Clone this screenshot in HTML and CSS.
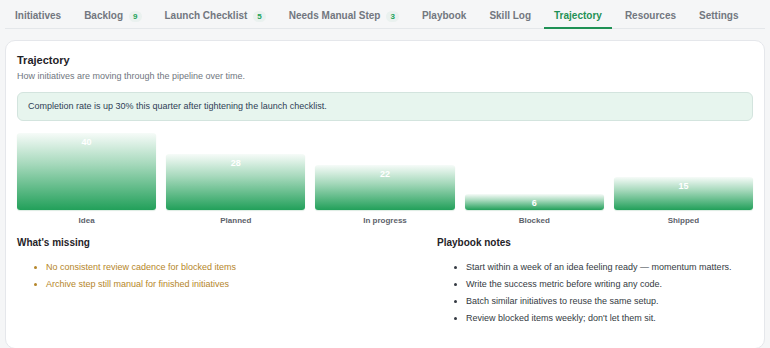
FILE: index.html
```html
<!DOCTYPE html>
<html lang="en">
<head>
<meta charset="utf-8">
<title>Trajectory</title>
<link rel="stylesheet" href="styles.css">
</head>
<body>
<div class="page">
  <nav class="tabs">
    <div class="tab">Initiatives</div>
    <div class="tab">Backlog <span class="badge">9</span></div>
    <div class="tab">Launch Checklist <span class="badge">5</span></div>
    <div class="tab">Needs Manual Step <span class="badge">3</span></div>
    <div class="tab">Playbook</div>
    <div class="tab">Skill Log</div>
    <div class="tab active">Trajectory</div>
    <div class="tab">Resources</div>
    <div class="tab">Settings</div>
  </nav>
  <section class="card">
    <h1 class="title">Trajectory</h1>
    <p class="subtitle">How initiatives are moving through the pipeline over time.</p>
    <div class="alert">Completion rate is up 30% this quarter after tightening the launch checklist.</div>
    <div class="chart">
      <div class="col">
        <div class="bar-area"><div class="bar" style="height:77px"><span class="val">40</span></div></div>
        <div class="label">Idea</div>
      </div>
      <div class="col">
        <div class="bar-area"><div class="bar" style="height:56px"><span class="val">28</span></div></div>
        <div class="label">Planned</div>
      </div>
      <div class="col">
        <div class="bar-area"><div class="bar" style="height:45px"><span class="val">22</span></div></div>
        <div class="label">In progress</div>
      </div>
      <div class="col">
        <div class="bar-area"><div class="bar" style="height:16px"><span class="val">6</span></div></div>
        <div class="label">Blocked</div>
      </div>
      <div class="col">
        <div class="bar-area"><div class="bar" style="height:33px"><span class="val">15</span></div></div>
        <div class="label">Shipped</div>
      </div>
    </div>
    <div class="notes">
      <div class="note-col">
        <h2 class="note-title">What's missing</h2>
        <ul class="list missing">
          <li>No consistent review cadence for blocked items</li>
          <li>Archive step still manual for finished initiatives</li>
        </ul>
      </div>
      <div class="note-col">
        <h2 class="note-title">Playbook notes</h2>
        <ul class="list playbook">
          <li>Start within a week of an idea feeling ready — momentum matters.</li>
          <li>Write the success metric before writing any code.</li>
          <li>Batch similar initiatives to reuse the same setup.</li>
          <li>Review blocked items weekly; don't let them sit.</li>
        </ul>
      </div>
    </div>
  </section>
</div>
</body>
</html>
```

FILE: styles.css
```css
* { box-sizing: border-box; }
html, body { margin: 0; padding: 0; }
body {
  background: #f5f6f7;
  font-family: "Liberation Sans", Arial, sans-serif;
  color: #1f2328;
}
.page { padding: 0 5px; }

.tabs {
  display: flex;
  gap: 3px;
  border-bottom: 1px solid #e4e7ea;
}
.tab {
  display: flex;
  align-items: center;
  gap: 6px;
  padding: 10px 10px 5px;
  line-height: 12px;
  font-size: 10px;
  font-weight: bold;
  color: #72777f;
  border-bottom: 2px solid transparent;
  margin-bottom: -1px;
  white-space: nowrap;
}
.tab.active {
  color: #1f9155;
  border-bottom-color: #1f9155;
}
.badge {
  font-size: 8px;
  font-weight: bold;
  color: #22a35a;
  padding: 0 4px;
  border-radius: 8px;
  background: rgba(34, 163, 90, 0.05);
  line-height: 11px;
}

.card {
  margin-top: 11px;
  background: #fff;
  border: 1px solid #e5e7eb;
  border-radius: 10px;
  padding: 12px 11px;
}
.title {
  margin: 0;
  font-size: 11px;
  line-height: 14px;
  font-weight: bold;
  color: #1f2328;
}
.subtitle {
  margin: 3px 0 0;
  font-size: 9px;
  line-height: 12px;
  color: #707680;
}
.alert {
  margin-top: 10px;
  background: #e7f5ee;
  border: 1px solid #d3e4de;
  border-radius: 6px;
  padding: 8px 10px;
  font-size: 9px;
  line-height: 11px;
  color: #2f3d55;
}

.chart {
  display: flex;
  gap: 10px;
  margin-top: 12px;
}
.col { flex: 1; display: flex; flex-direction: column; }
.bar-area {
  height: 77px;
  display: flex;
  align-items: flex-end;
}
.bar {
  width: 100%;
  border-radius: 3px;
  background: linear-gradient(to bottom, rgba(34, 160, 88, 0.04) 0%, rgba(34, 160, 88, 0.4) 40%, #22a05a 100%);
  box-shadow: 0 1px 1px rgba(20, 120, 60, 0.15);
  text-align: center;
  padding-top: 4px;
}
.val {
  display: block;
  font-size: 9px;
  line-height: 10px;
  font-weight: bold;
  color: #fff;
}
.label {
  margin-top: 6px;
  text-align: center;
  font-size: 8px;
  line-height: 10px;
  font-weight: bold;
  color: #5d626b;
}

.notes {
  display: grid;
  grid-template-columns: 420px 1fr;
  margin-top: 11px;
}
.note-title {
  margin: 0;
  font-size: 10px;
  line-height: 12px;
  font-weight: bold;
  color: #1f2328;
}
.list {
  margin: 12px 0 11px;
  padding-left: 29px;
  font-size: 9px;
  line-height: 13px;
}
.list li + li { margin-top: 4px; }
.missing { color: #b5862a; }
.playbook { color: #343a42; }
```
